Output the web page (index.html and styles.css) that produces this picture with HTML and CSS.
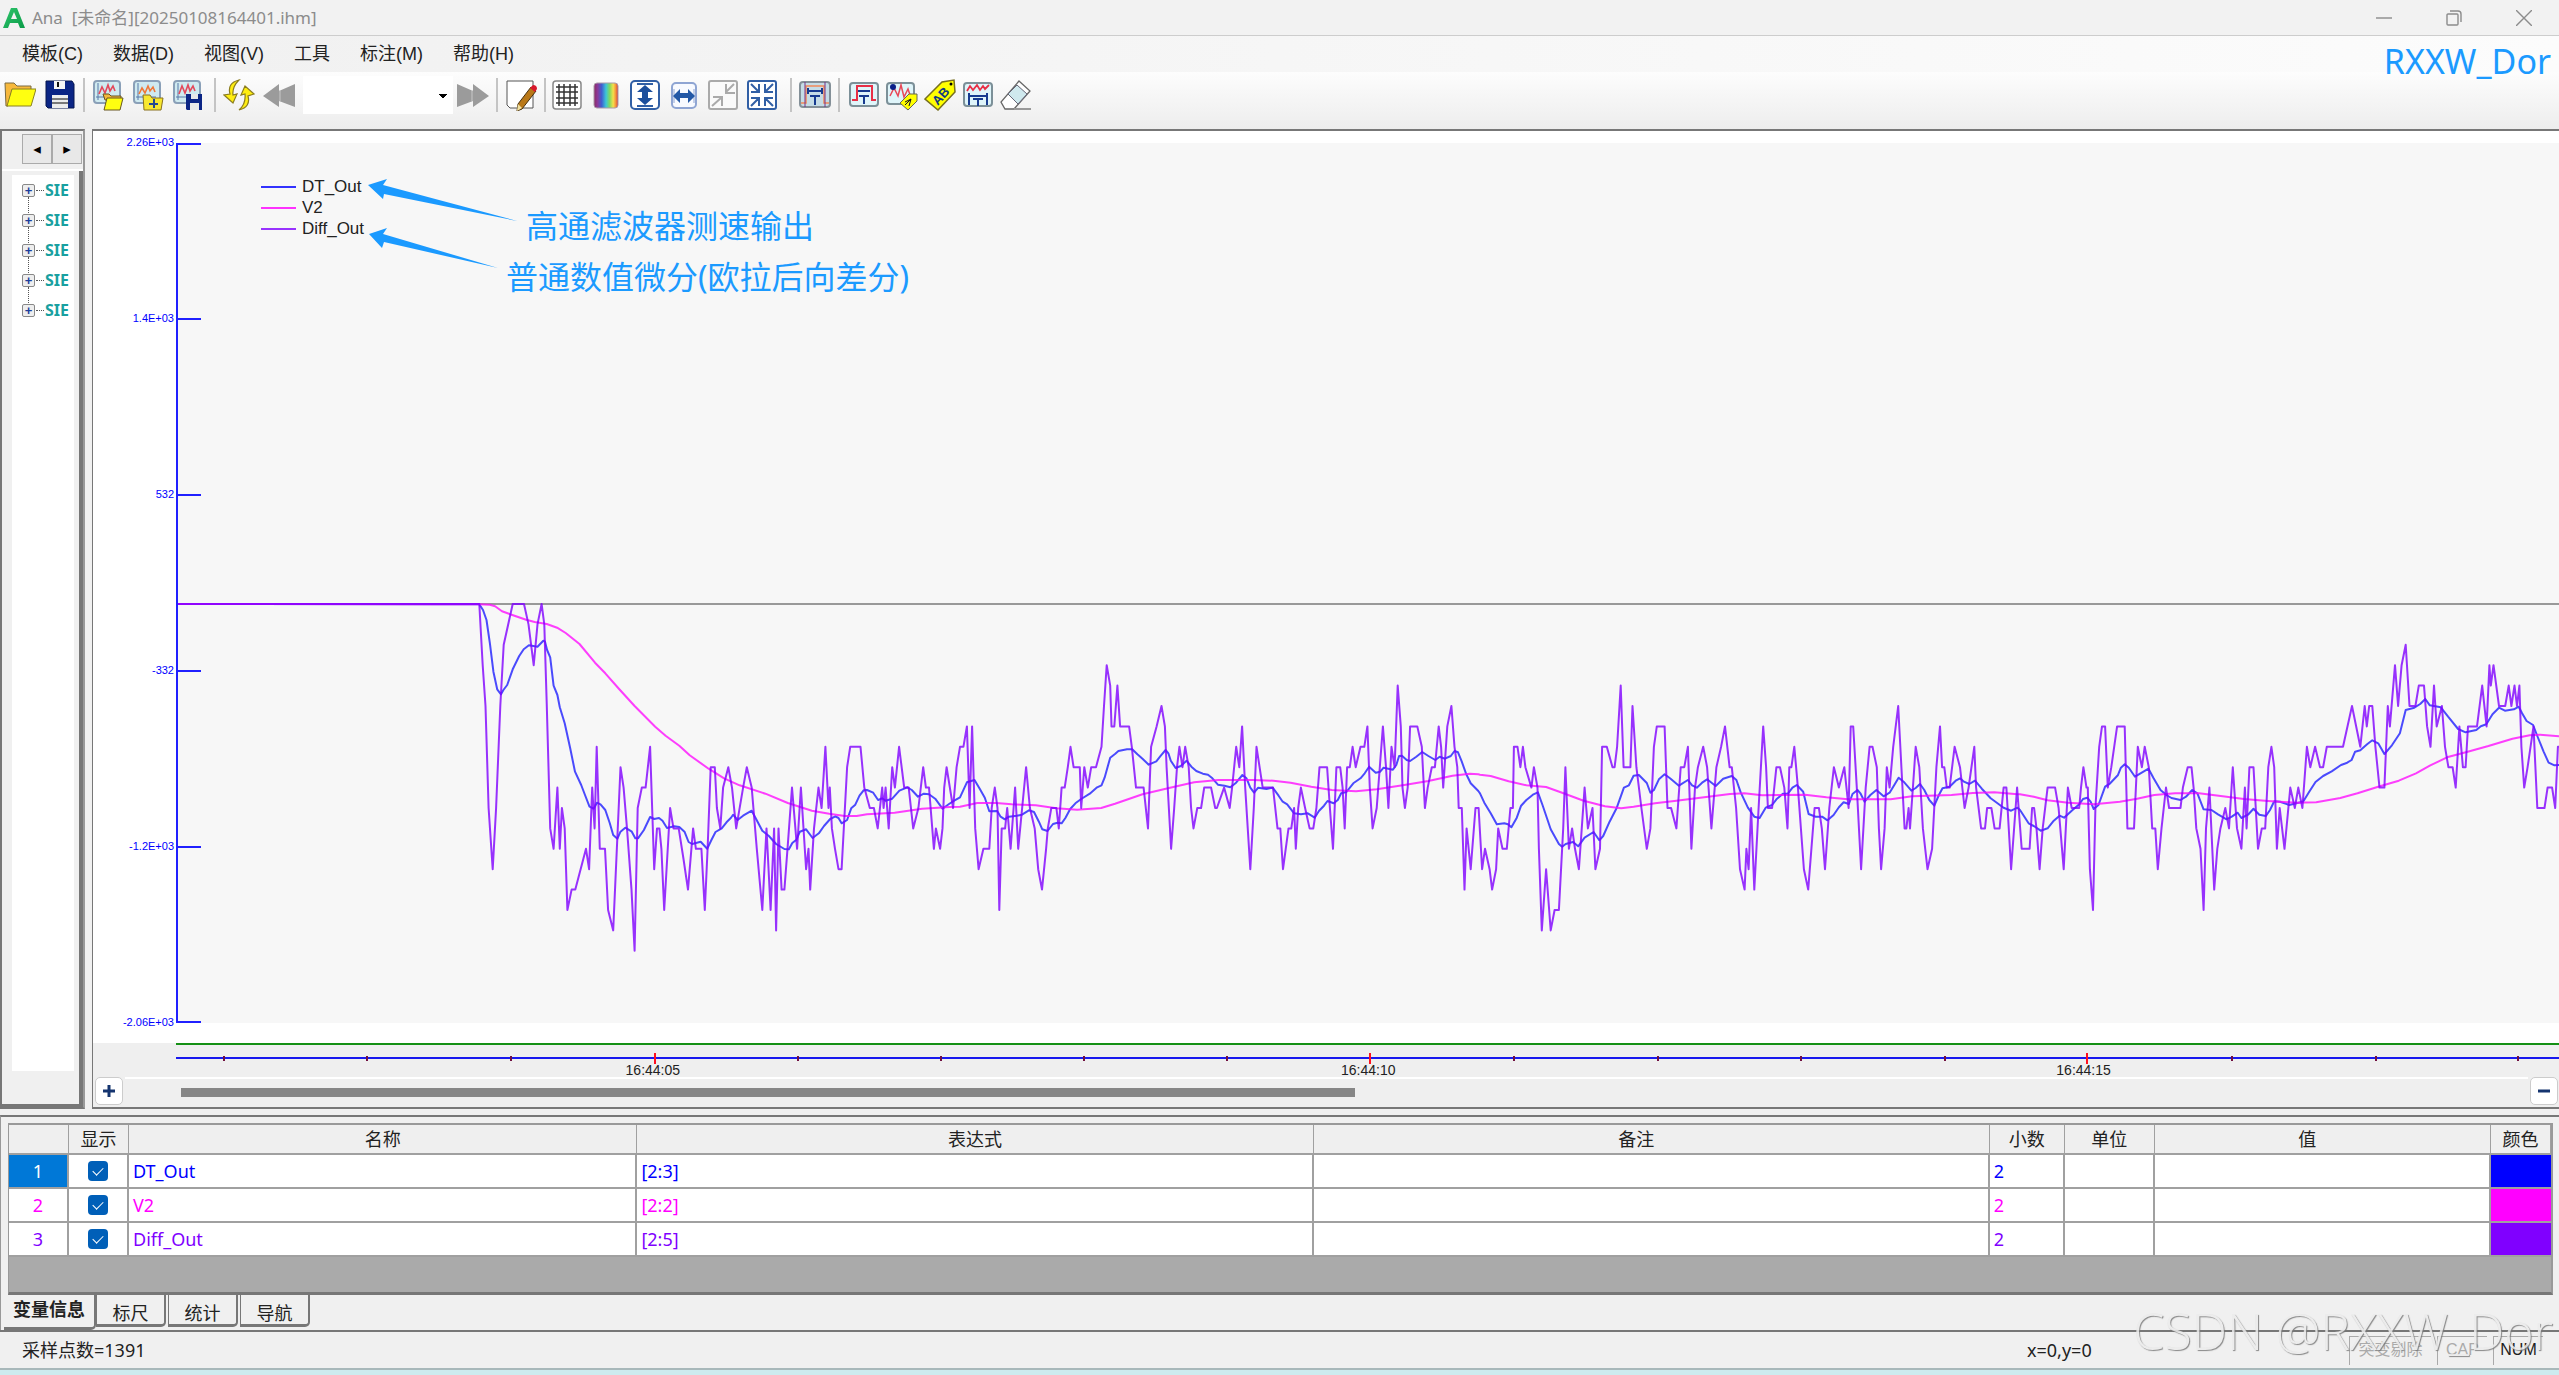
FILE: index.html
```html
<!DOCTYPE html>
<html lang="zh-CN">
<head>
<meta charset="utf-8">
<title>Ana [未命名][20250108164401.ihm]</title>
<link rel="stylesheet" href="styles.css">
</head>
<body>
<svg class="defs" aria-hidden="true">
  <defs>
    <linearGradient id="spectrum"><stop offset="0" stop-color="#8b2a63"/><stop offset=".15" stop-color="#8a3a9a"/><stop offset=".32" stop-color="#3f5fd0"/><stop offset=".5" stop-color="#3cc6d8"/><stop offset=".65" stop-color="#7fd860"/><stop offset=".8" stop-color="#f5e04a"/><stop offset=".92" stop-color="#f58a3a"/><stop offset="1" stop-color="#c33"/></linearGradient>
    <linearGradient id="logo" x2="1" y2="1"><stop offset="0" stop-color="#2fc46b"/><stop offset="1" stop-color="#0a9c48"/></linearGradient>
    <g id="screen"><rect x="2" y="2" width="26" height="22" rx="3" fill="#cfeaf0" stroke="#8aa0b8" stroke-width="2"/><path d="M6 4v17M4 18h20" stroke="#5878a8" fill="none"/></g>
    <g id="frame"><rect x="2" y="4" width="28" height="23" rx="3" fill="#dff5fa" stroke="#7c9098" stroke-width="2"/></g>
  </defs>
</svg>

<header class="titlebar">
  <svg class="logo" viewBox="0 0 22 20"><path fill="url(#logo)" fill-rule="evenodd" d="M0 20 8 0h6l8 20h-5l-2-5H7l-2 5zM8 11h6l-3-7z"/></svg>
  <h1 class="title">Ana&nbsp; [未命名][20250108164401.ihm]</h1>
  <div class="window-buttons">
    <button aria-label="最小化"><svg viewBox="0 0 16 16"><path d="M0 8h16"/></svg></button>
    <button aria-label="还原"><svg viewBox="0 0 16 16"><rect x="1" y="4" width="11" height="11" rx="1"/><path d="M4 1h8q3 0 3 3v8"/></svg></button>
    <button aria-label="关闭"><svg viewBox="0 0 16 16"><path d="m0 0 16 16M16 0 0 16"/></svg></button>
  </div>
</header>

<div class="command-area">
  <nav class="menubar">
    <button>模板(C)</button><button>数据(D)</button><button>视图(V)</button><button>工具</button><button>标注(M)</button><button>帮助(H)</button>
  </nav>
  <div class="toolbar">
    <button aria-label="打开"><svg viewBox="0 0 32 32"><path d="M1 4h9l3 3h14v7H7L4 27H2z" fill="#f7b83c" stroke="#7a6a40"/><path d="M8 10h24l-5 17H3z" fill="#ffff10" stroke="#8a8020"/></svg></button>
    <button aria-label="保存"><svg viewBox="0 0 32 32"><path d="M2 2h26l2 3v24H4l-2-2z" fill="#0b2585" stroke="#06164e"/><rect x="10" y="2" width="11" height="8" fill="#f6f6f6"/><path d="M14 3v5" stroke="#111" stroke-width="2"/><rect x="8" y="16" width="16" height="13" fill="#eee"/><path d="M8 20h16M8 24h16" stroke="#555" stroke-width="1.5"/></svg></button>
    <span class="sep"></span>
    <div class="data-tools">
    <button aria-label="打开数据"><svg viewBox="0 0 32 32"><use href="#screen"/><path d="m7 15 3-7 3 6 3-8 2 6 3-5 2 5" fill="none" stroke="#e3485a" stroke-width="1.6"/><path d="M11 15h6l2 2h10v4H13z" fill="#f5b83c" stroke="#665520"/><path d="M15 19h16l-3 12H12z" fill="#ffff10" stroke="#665520"/></svg></button>
    <button aria-label="追加数据"><svg viewBox="0 0 32 32"><use href="#screen"/><path d="m7 15 3-6 3 5 3-7 2 5 3-4 2 5" fill="none" stroke="#f07838" stroke-width="1.6"/><path d="M11 16h7l2 3h11l-2 12H12z" fill="#f8e830" stroke="#887020"/><path d="M22 20v9M17 25h9" stroke="#264a90" stroke-width="2"/></svg></button>
    <button aria-label="保存数据"><svg viewBox="0 0 32 32"><use href="#screen"/><path d="m7 15 3-8 3 7 3-8 2 6 3-5 2 5" fill="none" stroke="#e3485a" stroke-width="1.6"/><path d="M14 15h16v16H15l-1-1z" fill="#0b2585"/><path d="M19 15h7v5h-7zM18 24h9v7h-9z" fill="#e8e8e8"/></svg></button>
    </div>
    <span class="sep"></span>
    <button aria-label="刷新"><svg viewBox="0 0 32 32"><path d="M16 1Q4 4 7 15l-6 1 9 8 4-9-4 1Q9 8 16 1zM16 31q12-3 9-14l6-2-9-8-4 9 4-1q1 10-6 16z" fill="#ffee10" stroke="#8b7d20" stroke-width="1.2"/></svg></button>
    <button aria-label="后退"><svg viewBox="0 0 32 32"><path d="M0 17 16 5v7L32 5v23l-16-6v6z" fill="#9b9b9b"/><path d="M17 11v11" stroke="#c8c8c8"/></svg></button>
    <select class="combo" aria-label="位置"><option></option></select>
    <button aria-label="前进"><svg viewBox="0 0 32 32"><path d="M32 17 16 5v7L0 5v23l16-6v6z" fill="#9b9b9b"/><path d="M15 11v11" stroke="#c8c8c8"/></svg></button>
    <span class="sep"></span>
    <button aria-label="编辑"><svg viewBox="0 0 32 32"><path d="M2 2h26v27H5l-3-3z" fill="#fff" stroke="#555"/><path d="m26 8 5 4-14 18-5 2 1-7z" fill="#b97817" stroke="#463010"/><path d="m25 9 3-3q4 0 4 4l-2 3z" fill="#d8182c"/><path d="m13 25 4 4-5 3z" fill="#f0e0a0"/></svg></button>
    <span class="sep"></span>
    <div class="view-tools">
    <button aria-label="网格"><svg viewBox="0 0 32 32"><rect x="2" y="2" width="28" height="28" rx="3" fill="#fff" stroke="#888" stroke-width="1.5"/><path d="M8 5v22M13 5v22M19 5v22M24 5v22M5 8h22M5 13h22M5 19h22M5 24h22" stroke="#333" stroke-width="1.5"/></svg></button>
    <button aria-label="颜色"><svg viewBox="0 0 32 32"><rect x="4" y="4" width="24" height="25" rx="3" fill="url(#spectrum)" stroke="#a99aa8"/></svg></button>
    <button aria-label="纵向缩放"><svg viewBox="0 0 32 32" class="blue"><rect x="2" y="2" width="28" height="28" rx="4" fill="#fff"/><path d="M8 5h16M8 27h16"/><path d="m16 6 8 7h-5v6h5l-8 7-8-7h5v-6H8z" fill="#1d4f9c" stroke="none"/></svg></button>
    <button aria-label="横向缩放"><svg viewBox="0 0 32 32"><rect x="4" y="4" width="24" height="25" rx="4" fill="#f8faff" stroke="#8fa5d3" stroke-width="2"/><path d="M6 10v14M26 10v14" stroke="#8fa5d3"/><path d="m5 17 7-7v4h8v-4l7 7-7 7v-5h-8v5z" fill="#2358a6"/></svg></button>
    <button aria-label="缩小"><svg viewBox="0 0 32 32" class="grey"><rect x="2" y="2" width="28" height="28" rx="2" fill="#fafafa"/><path d="m27 5-8 8M19 5v9h9M5 27l9-8M6 18h9v9"/></svg></button>
    <button aria-label="适应窗口"><svg viewBox="0 0 32 32" class="blue"><rect x="2" y="2" width="28" height="28" rx="2" fill="#fff"/><path d="m5 5 8 8M27 5l-8 8M5 27l8-8M27 27l-8-8M5 13h8V5M19 5v8h8M5 19h8v8M27 19h-8v8"/></svg></button>
    </div>
    <span class="sep"></span>
    <button aria-label="时间标尺"><svg viewBox="0 0 32 32"><rect x="1" y="3" width="30" height="25" rx="3" fill="#c5dce6" stroke="#849098" stroke-width="2"/><path d="M2 24h5V7h18v17h5" fill="none" stroke="#f28858" stroke-width="1.5"/><path d="M6 3v25M26 3v25" stroke="#738"/><path d="M9 12h14M11 17h10M16 17v9M9 9v6M23 9v6" stroke="#173b90" stroke-width="2"/></svg></button>
    <span class="sep"></span>
    <div class="tag-tools">
    <button aria-label="周期标注"><svg viewBox="0 0 32 32"><use href="#frame"/><path d="M4 21h5V7h15v14h4" fill="none" stroke="#e82f46" stroke-width="2"/><path d="M10 12h12M11 17h10M16 17v8" stroke="#173b90" stroke-width="2"/></svg></button>
    <button aria-label="波形标注"><svg viewBox="0 0 32 32"><rect x="1" y="4" width="27" height="21" rx="3" fill="#dff5fa" stroke="#7c9098" stroke-width="2"/><path d="m4 17 4-8 4 8 3-11 3 12 4-8 2 6" fill="none" stroke="#e84858" stroke-width="1.5"/><circle cx="7" cy="8" r="3" fill="#0b1f88"/><path d="m14 24 9-9h8v7l-9 9z" fill="#ff0" stroke="#665"/><path d="m19 26 6-6m-2 7 2-7-6 3" stroke="#112" fill="none"/></svg></button>
    <button aria-label="文字标注"><svg viewBox="0 0 32 32"><path d="M1 20 18 3l12-2 1 12-17 18z" fill="#ff0" stroke="#776f20" stroke-width="1.5"/><circle cx="27" cy="5" r="1.5"/><text x="-9" y="5" transform="translate(16 17) rotate(-48)" class="tag-text">AB</text></svg></button>
    <button aria-label="区间标注"><svg viewBox="0 0 32 32"><use href="#frame"/><path d="m5 12 3-5 3 4 4-5 3 5 3-4 2 3 4-4" fill="none" stroke="#e82f46" stroke-width="1.8"/><path d="M7 14v12M25 14v12M8 17h16M11 20h10M16 20v7" stroke="#173b90" stroke-width="2"/></svg></button>
    <button aria-label="擦除"><svg viewBox="0 0 32 32"><path d="m19 2 11 10-16 18H5l-4-7z" fill="#fff" stroke="#666" stroke-width="1.3"/><path d="m17 6 10 9-9 10L8 15z" fill="#cfe9ee" stroke="#667"/><path d="M14 30h17" stroke="#999" stroke-width="2"/></svg></button>
    </div>
  </div>
  <span class="author">RXXW_Dor</span>
</div>

<main class="workspace">
  <aside class="side">
    <div class="side-nav"><button aria-label="左">◂</button><button aria-label="右">▸</button></div>
    <div class="side-body">
      <ul class="tree">
        <li><button aria-label="展开">+</button><span>SIE</span></li>
        <li><button aria-label="展开">+</button><span>SIE</span></li>
        <li><button aria-label="展开">+</button><span>SIE</span></li>
        <li><button aria-label="展开">+</button><span>SIE</span></li>
        <li><button aria-label="展开">+</button><span>SIE</span></li>
      </ul>
    </div>
  </aside>

  <section class="chart">
    <div class="plot-row">
      <div class="y-labels"><span>2.26E+03</span><span>1.4E+03</span><span>532</span><span>-332</span><span>-1.2E+03</span><span>-2.06E+03</span></div>
      <div class="plot">
        <svg class="plot-svg" viewBox="176 143 2383 880" preserveAspectRatio="none">
          <path class="zero" d="M176 604H2559"/>
          <path id="line-dt" class="line dt"/>
          <path id="line-v2" class="line v2"/>
          <path id="line-diff" class="line diff"/>
          <path class="axis" d="M201 144H177V1022H201M177 319H201M177 495H201M177 671H201M177 847H201"/>
        </svg>
        <ul class="legend">
          <li class="c-dt"><span>DT_Out</span></li><li class="c-v2"><span>V2</span></li><li class="c-diff"><span>Diff_Out</span></li>
        </ul>
        <svg class="arrows" viewBox="0 0 160 100"><path d="m1 14 19-6-4 6 134 36L17 23l-1 5zM2 63l18-6-4 6 115 34L17 71l-2 6z"/></svg>
        <p class="note note-high">高通滤波器测速输出</p>
        <p class="note note-diff">普通数值微分(欧拉后向差分)</p>
      </div>
    </div>
    <div class="time-row">
      <div class="time-axis">
        <svg class="time-svg" viewBox="176 1044 2383 22" preserveAspectRatio="none">
          <path class="time-line" d="M176 1057H2559"/>
          <path class="minor" d="M224 1055v5M367 1055v5M511 1055v5M798 1055v5M941 1055v5M1084 1055v5M1227 1055v5M1514 1055v5M1658 1055v5M1801 1055v5M1945 1055v5M2232 1055v5M2376 1055v5M2518 1055v5"/>
          <path class="major" d="M655 1052v11M1370 1052v11M2087 1052v11"/>
        </svg>
        <div class="time-labels"><span>16:44:05</span><span>16:44:10</span><span>16:44:15</span></div>
      </div>
    </div>
    <div class="scroll-row">
      <button class="zoom" aria-label="放大"><svg viewBox="0 0 14 14"><path d="M7 1v12M1 7h12"/></svg></button>
      <div class="track"><div class="thumb"></div></div>
      <button class="zoom" aria-label="缩小"><svg viewBox="0 0 14 14"><path d="M1 7h12"/></svg></button>
    </div>
  </section>
</main>

<section class="bottom">
  <div class="grid-box">
    <table class="vars">
      <colgroup><col class="w-s"><col class="w-s"><col class="w-name"><col class="w-wide"><col class="w-wide"><col class="w-dec"><col class="w-unit"><col><col class="w-s"></colgroup>
      <thead><tr><th></th><th>显示</th><th>名称</th><th>表达式</th><th class="has-sort">备注</th><th>小数</th><th>单位</th><th class="has-sort">值</th><th>颜色</th></tr></thead>
      <tbody>
        <tr class="c-dt"><td class="num selected">1</td><td class="tick"><input type="checkbox" checked aria-label="显示 DT_Out"></td><td>DT_Out</td><td>[2:3]</td><td></td><td>2</td><td></td><td></td><td class="swatch"></td></tr>
        <tr class="c-v2"><td class="num">2</td><td class="tick"><input type="checkbox" checked aria-label="显示 V2"></td><td>V2</td><td>[2:2]</td><td></td><td>2</td><td></td><td></td><td class="swatch"></td></tr>
        <tr class="c-diff"><td class="num">3</td><td class="tick"><input type="checkbox" checked aria-label="显示 Diff_Out"></td><td>Diff_Out</td><td>[2:5]</td><td></td><td>2</td><td></td><td></td><td class="swatch"></td></tr>
      </tbody>
    </table>
  </div>
  <div class="tabs"><button class="active">变量信息</button><button>标尺</button><button>统计</button><button>导航</button></div>
</section>

<footer class="status">
  <span class="samples">采样点数=1391</span>
  <span class="coords">x=0,y=0</span>
  <span class="cell dim w-cut">突变剔除</span>
  <span class="cell dim">CAP</span>
  <span class="cell">NUM</span>
  <span class="watermark">CSDN @RXXW_Dor</span>
</footer>
<div class="desktop-edge"></div>
<script src="chart.js"></script>
</body>
</html>
```

FILE: styles.css
```css
* { box-sizing: border-box; }
body {
  margin: 0;
  height: 100vh;
  display: flex;
  flex-direction: column;
  background: #f0f0f0;
  color: #222;
  font: 18px/24px "Noto Sans", "Noto Sans CJK SC", sans-serif;
  overflow: hidden;
}
button { border: 0; padding: 0; background: none; font: inherit; color: inherit; }
ul, p, h1 { margin: 0; padding: 0; list-style: none; }
.defs { position: absolute; width: 0; height: 0; }

.titlebar { display: flex; align-items: center; height: 36px; padding-left: 3px; background: #f2f2f2; border-bottom: 1px solid #cdcdcd; }
.logo { width: 22px; height: 20px; }
.title { flex: 1; margin-left: 7px; font-size: 17px; font-weight: 400; color: #8c8c8c; }
.window-buttons { display: flex; }
.window-buttons button { display: flex; justify-content: center; width: 70px; }
.window-buttons svg { width: 16px; height: 16px; fill: none; stroke: #8c8c8c; stroke-width: 1.4; }

.command-area { position: relative; }
.menubar { display: flex; gap: 30px; height: 36px; padding-left: 22px; background: linear-gradient(to right, #f0f0f0, #f3f3f3 25%, #fcfcfc); font: 18px/36px "Liberation Sans", "Noto Sans CJK SC", sans-serif; }
.toolbar { display: flex; align-items: center; height: 57px; padding: 0 0 12px; background: linear-gradient(#fdfdfd, #ededed); }
.toolbar button { display: flex; justify-content: center; width: 40px; }
.toolbar svg { width: 32px; height: 32px; }
.data-tools, .view-tools, .tag-tools { display: flex; }
.data-tools { padding-right: 3px; }
.view-tools { margin-left: -2px; padding-right: 6px; }
.toolbar .view-tools button { width: 39px; }
.tag-tools { padding-left: 2px; }
.toolbar .tag-tools button { width: 38px; }
.sep { width: 2px; height: 34px; margin: 0 3px; background: #c4c4c4; }
.combo { appearance: none; width: 150px; height: 38px; margin: 0 0 0 4px; border: 0; border-radius: 0; background: linear-gradient(45deg, transparent 50%, #000 50%) no-repeat 136px 18px / 4px 4px, linear-gradient(-45deg, transparent 50%, #000 50%) no-repeat 140px 18px / 4px 4px, #fff; }
.blue { fill: none; stroke: #315fa5; stroke-width: 2; }
.grey { fill: none; stroke: #aaa; stroke-width: 2; }
.tag-text { font: bold 13px "Liberation Sans", sans-serif; fill: #123a80; }
.author { position: absolute; right: 8px; top: 3px; font-size: 34px; line-height: 44px; color: #1b9aff; }

.workspace { flex: 1; display: flex; gap: 7px; min-height: 0; }
.side { display: flex; flex-direction: column; width: 85px; border: 2px solid #777; border-right-color: #999; }
.side-nav { display: flex; padding: 3px 0 5px 20px; border-bottom: 2px solid #fff; }
.side-nav button { width: 30px; height: 30px; border: 1px solid #aaa; background: #e8e8e8; font: 15px/28px "DejaVu Sans", sans-serif; color: #000; }
.side-body { flex: 1; display: flex; padding: 4px 5px 33px 10px; border-right: 4px solid #777; border-bottom: 3px solid #777; }
.tree { flex: 1; background: #fff; padding-left: 10px; }
.tree li { position: relative; display: flex; align-items: center; height: 30px; font: bold 16px/30px "Noto Sans", sans-serif; color: #18a0a0; }
.tree button { width: 13px; height: 13px; border: 1px solid #888; border-radius: 2px; background: #eee; color: #1c3f9c; font: bold 13px/11px "Liberation Sans", sans-serif; }
.tree li::before { content: ""; order: 1; width: 8px; margin: 0 1px; border-top: 1px dotted #555; }
.tree span { order: 2; }
.tree li + li::after { content: ""; position: absolute; left: 6px; top: -8px; height: 16px; border-left: 1px dotted #555; }

.chart { flex: 1; min-width: 0; display: flex; flex-direction: column; border: solid #777; border-width: 2px 0 2px 1px; background: #fff; }
.plot-row { flex: 1; display: grid; grid-template: minmax(0, 1fr) / 83px 1fr; min-height: 0; padding: 12px 0 20px; }
.y-labels { display: flex; flex-direction: column; justify-content: space-between; align-items: flex-end; margin: -9px 2px -7px 0; font: 11px/16px "Liberation Sans", sans-serif; color: #0000ff; }
.plot { position: relative; background: #f7f7f7; min-height: 0; }
.plot-svg { display: block; width: 100%; height: 100%; }
.plot-svg path { fill: none; vector-effect: non-scaling-stroke; }
.zero { stroke: #999; stroke-width: 2; }
.plot-svg .line { stroke-width: 2; stroke-linejoin: round; opacity: .8; }
.dt { stroke: #2020ff; }
.v2 { stroke: #ff10ff; }
.diff { stroke: #8000ff; }
.axis { stroke: #2020ff; stroke-width: 2; }
.c-dt { color: #0000ff; }
.c-v2 { color: #ff00ff; }
.c-diff { color: #8000ff; }
.legend { position: absolute; left: 85px; top: 33px; font: 17px/21px "Liberation Sans", sans-serif; }
.legend li { display: flex; align-items: center; gap: 6px; }
.legend li::before { content: ""; width: 35px; height: 2px; background: currentColor; opacity: .8; }
.legend span { color: #222; }
.arrows { position: absolute; left: 191px; top: 28px; width: 160px; height: 100px; fill: #1b9aff; }
.note { position: absolute; font-size: 32px; line-height: 40px; color: #1b9aff; white-space: nowrap; }
.note-high { left: 350px; top: 63px; }
.note-diff { left: 330px; top: 114px; }

.time-row { padding-left: 83px; background: #efefef; }
.time-axis { position: relative; border-top: 2px solid #159015; }
.time-svg { display: block; width: 100%; height: 22px; }
.time-svg path { fill: none; stroke-width: 2; }
.time-line { stroke: #1818ee; }
.time-svg .minor { stroke: #701040; }
.time-svg .major { stroke: #ff1020; }
.time-labels { display: flex; height: 9px; padding-left: 5%; font: 14px/6px "Liberation Sans", sans-serif; }
.time-labels span { flex: 0 0 31.6%; text-align: center; }
.scroll-row { display: flex; gap: 2px; height: 31px; padding: 1px 1px 1px 2px; background: #efefef; }
.zoom { display: flex; align-items: center; justify-content: center; width: 28px; height: 28px; border: 1px solid #ccc; border-radius: 5px; background: #fff; }
.zoom svg { width: 14px; height: 14px; stroke: #15346f; stroke-width: 3; }
.track { flex: 1; padding: 9px 0 0 56px; border-top: 2px solid #fff; }
.thumb { width: 50%; height: 9px; background: #868686; }

.bottom { margin-top: 6px; padding: 6px 6px 0 7px; border-top: 2px solid #777; border-left: 1px solid #999; }
.grid-box { height: 172px; background: #aaa; border: solid #999; border-width: 2px 2px 3px 1px; border-bottom-color: #777; }
.vars { width: 100%; table-layout: fixed; border-collapse: separate; border-spacing: 0; line-height: 30px; }
.vars th { height: 30px; padding: 0; font-weight: 400; line-height: 28px; background: #efefef; border: solid #a0a0a0; border-width: 0 1px 2px 0; }
.vars .has-sort { padding-right: 30px; }
.vars td { height: 34px; padding: 0 4px; background: #fff; border: solid #a0a0a0; border-width: 0 2px 2px 0; }
.w-s { width: 60px; }
.w-name { width: 20%; }
.w-wide { width: 26.6%; }
.w-dec { width: 75px; }
.w-unit { width: 90px; }
.vars .num, .vars .tick { padding: 0; text-align: center; }
.vars .selected { background: #0078d7; color: #fff; }
.vars .swatch { background: currentColor; border-right: 0; }
.tick input { appearance: none; display: block; width: 20px; height: 20px; margin: 0 auto; border-radius: 4px; background: #005fb8; }
.tick input::after { content: ""; display: block; width: 9px; height: 5px; margin: 0 auto; border: solid #fff; border-width: 0 0 1px 1px; transform: translateY(6px) rotate(-45deg); }
.tabs { display: flex; align-items: flex-start; gap: 2px; height: 35px; margin-left: -4px; }
.tabs button { width: 70px; height: 32px; padding-top: 6px; border: solid #777; border-width: 0 2px 3px 1px; border-radius: 0 0 5px 0; line-height: 22px; }
.tabs .active { width: 92px; height: 35px; margin-right: -2px; padding: 0 0 4px; border-left: 0; font-weight: 600; }

.status { position: relative; display: flex; align-items: center; height: 40px; padding: 0 16px 0 22px; border: solid #777; border-width: 2px 0; border-bottom-color: #a8b8ba; }
.samples { flex: 1; }
.coords { width: 316px; }
.cell { width: 50px; height: 29px; margin-left: 6px; border: solid #aaa; border-width: 1px 0 0 1px; font: 16px/26px "Liberation Sans", "Noto Sans CJK SC", sans-serif; text-align: center; }
.dim { color: #aaa; }
.w-cut { width: 82px; }
.watermark { position: absolute; right: 6px; bottom: 3px; font: 300 50px/68px "Open Sans", sans-serif; color: #ececec; text-shadow: 1px 1px 1px #777; opacity: .85; white-space: nowrap; }
.desktop-edge { height: 5px; background: #cdebef; }
```

FILE: chart.js
```js
const blocks = [
  { x0: 440, sx: 2.9037, y0: 580,
    diff: "0,0 114,0 124,3 132,5 141,10 153,13 163,10 175,5 185,2 211,0 244,0 257,1 272,3 283,1 295,0 303,1 310,5 320,11 330,12 341,9 348,12 354,10 362,11 370,15 382,14 393,14 424,12 433,13 442,9 449,11 455,7 464,12 479,12 488,15 503,16 524,8 533,9 543,11 556,14 565,17 574,10 586,9 597,9 610,7 622,13 630,11 637,11 643,12 651,15 668,10 678,11 693,11 707,12.5 720,14 735,11 743,12 759,12 769,15 777,12 786,8 798,8 804,10 814,11 822,9 837,8 848,9 860,11 880,9 891,8 905,9 920,12 936,15 948,11 960,15 970,11 976,16 983,11 992,14 1000,14 1009,12 1022,9 1037,12 1048,9 1063,13 1070,12 1075,14 1086,11 1099,9 1108,10 1119,7 1128,10 1132,9 1138,11 1147,12 1157,13 1166,13 1182,8 1191,7 1221,7 1232,9 1248,10 1260,10 1271,11 1284,9 1288,10 1294,9 1303,11 1313,8 1321,9 1333,7 1348,9 1361,9 1374,11 1389,10 1403,8 1411,9 1420,9 1434,12 1440,11 1452,12 1459,11 1464,9 1471,8 1490,10 1500,8",
    dt: "0,73 114,73 125,90 135,120 145,190 155,275 166,328 177,343 184,330 195,315 211,268 230,228 243,208 258,196 283,200 300,182 305,185 311,210 320,232 330,317 341,345 348,382 362,430 378,505 392,575 410,615 421,645 434,680 446,686 456,668 466,673 480,690 493,730 503,765 515,776 524,755 538,743 557,755 567,775 575,775 592,750 610,711 622,717 636,714 646,722 659,744 680,739 695,741 710,755 722,786 732,792 757,785 776,806 788,780 800,756 818,745 832,727 845,713 851,704 864,720 880,707 905,692 918,717 936,752 955,768 976,792 1000,807 1013,808 1023,789 1035,779 1045,755 1063,748 1082,774 1100,760 1115,738 1133,717 1148,709 1157,714 1166,730 1182,720 1194,685 1206,674 1218,647 1230,631 1240,630 1258,638 1272,660 1284,655 1294,662 1313,656 1334,632 1357,622 1370,630 1388,650 1405,641 1420,643 1438,656 1459,686 1478,672 1493,662",
    v2: "0,73 114,73 145,74 160,79 180,94 210,105 250,119 275,126 310,132 340,143 365,159 405,192 450,248 480,280 520,327 565,378 625,440 655,467 695,497 725,526 780,566 825,595 870,616 945,641 1010,669 1080,692 1130,701 1175,708 1210,708 1240,703 1320,698 1400,686 1480,681" },
  { x0: 960, sx: 2.9037, y0: 620,
    diff: "0,7 10,7 20,6 28,10 35,6 44,11 54,13 68,12 85,12 92,10 101,9 109,10 114,15 121,11 131,11 137,10 147,12 160,9 169,12 192,8 203,10 217,11 227,13 238,14 250,12 255,11 265,10 280,10 287,11 295,9 304,9 313,8 321,7 330,8 348,8 352,10 361,8 371,9 381,8 395,8 411,7 418,5 426,3 436,4 440,6 448,6 457,4 465,6 491,6 499,7 511,9 533,9 546,11 555,7 571,6 585,5 595,6 600,8 613,12 622,10 630,8 637,7 646,8 654,7 664,8 671,10 678,11 689,10 700,10 709,9 729,9 741,10 746,10 767,9 783,10 790,9 802,7 811,8 819,6 828,9 843,13 853,10 861,7 879,9 909,9 922,11 930,11 938,13 954,11 962,11 970,10 975,12 982,10 990,9 1002,10 1015,11 1026,11 1035,10 1044,8 1066,8 1074,10 1083,12 1093,8 1104,8 1111,9 1117,11 1124,8 1132,8 1140,7 1149,8 1163,7 1174,7 1183,6 1190,9 1198,11 1210,10 1228,6 1237,8 1244,10 1253,7 1262,8 1271,4 1280,6 1285,9 1292,10 1300,9 1307,6 1328,6 1341,7 1350,10 1358,9 1370,8 1379,8 1390,6 1397,7 1403,9 1415,6 1427,5 1436,7 1444,8 1448,10 1457,10 1465,14 1471,11 1483,13 1497,10 1506,10",
    dt: "0,532 20,487 42,480 58,508 72,533 85,574 108,573 118,590 130,598 142,590 165,587 180,584 200,571 215,576 229,605 239,628 254,633 270,612 283,608 295,610 306,594 320,567 335,550 352,537 377,521 398,502 411,496 420,473 436,413 450,402 460,393 485,388 500,388 515,403 530,416 548,434 570,424 583,407 597,390 605,400 612,422 626,444 641,438 658,422 672,440 686,453 705,461 720,464 733,475 749,494 768,497 785,502 800,490 820,465 832,475 843,503 854,518 866,503 890,507 908,503 925,527 937,545 950,553 970,580 990,583 1010,580 1030,593 1042,573 1057,557 1067,543 1085,550 1097,540 1107,520 1122,516 1142,490 1163,475 1175,460 1188,440 1207,458 1220,455 1230,443 1257,449 1267,435 1275,408 1283,407 1297,420 1307,423 1325,410 1342,396 1360,408 1380,420 1393,410 1408,416 1425,408 1436,393 1446,397 1457,425 1470,463 1483,490 1505,513",
    v2: "0,560 50,549 105,549 150,553 220,556 280,565 340,569 410,564 450,551 530,523 610,503 680,487 750,480 850,480 910,482 960,488 1020,500 1080,510 1150,514 1210,508 1290,495 1360,483 1430,467 1480,461 1505,463" },
  { x0: 1480, sx: 2.8, y0: 640,
    diff: "6,13 14,12 27,13 34,14 45,13 51,11 63,12 75,12 85,10 92,10 95,7 105,7 113,8 120,7 127,8 144,9 151,8 161,9 165,12 173,16 185,13 198,16 209,15 221,15 233,11 239,8 249,12 258,11 266,12 277,13 293,9 302,11 315,10 323,13 336,12 342,7 355,7 371,8 377,8 384,7 394,4 402,8 421,8 427,5 438,8 452,10 467,12 477,11 487,7 495,6 517,6 525,10 535,10 550,11 562,8 572,8 582,7 592,12 602,9 610,8 625,7 636,8 648,11 662,8 675,7 686,6 699,8 705,8 717,10 728,13 741,14 746,12 752,13 759,10 768,14 780,10 793,6 801,8 806,10 818,10 830,8 840,8 852,9 861,11 866,8 872,8 880,7 890,9 907,13 919,14 937,10 949,10 957,11 966,13 978,10 991,8 1005,9 1020,8 1032,10 1038,6 1045,6 1055,9 1067,13 1080,9 1091,7 1099,7 1111,8 1117,11 1123,13 1133,11 1139,8 1147,9 1157,7 1171,5 1180,8 1189,11 1194,11 1200,10 1204,11 1212,9 1220,7 1230,8 1240,11 1253,13 1266,12 1278,8 1288,6 1294,8 1300,8 1307,9 1315,9 1329,7 1344,8 1357,10 1368,9 1384,7 1389,9 1403,11 1414,11 1420,10 1432,10 1441,11 1455,11 1466,9 1474,9 1487,13 1504,9",
    dt: "0,460 12,488 30,520 47,553 68,550 78,553 88,562 103,533 115,497 130,480 148,464 162,457 175,495 198,568 221,612 230,620 240,612 260,606 275,619 293,593 318,576 334,601 345,588 363,545 383,503 403,443 417,436 430,407 445,405 467,429 477,458 487,450 501,418 517,403 532,415 557,437 582,420 594,436 607,443 622,428 636,418 660,438 681,416 705,408 718,420 730,457 750,503 768,530 783,534 800,503 818,495 830,478 848,461 862,461 875,443 887,435 905,455 920,522 940,530 958,530 973,541 990,525 1005,502 1018,487 1033,492 1043,462 1057,450 1065,460 1077,485 1093,465 1110,450 1130,469 1147,458 1160,435 1172,413 1186,425 1208,452 1220,444 1232,432 1244,450 1258,480 1272,497 1285,465 1295,445 1315,440 1332,422 1344,415 1355,425 1370,432 1386,422 1405,446 1430,475 1466,503 1487,512 1505,503",
    v2: "0,404 30,408 80,424 130,436 185,441 230,458 290,482 350,499 395,505 430,500 490,490 550,482 650,469 700,462 740,460 790,466 910,464 970,472 1030,478 1150,478 1210,469 1320,465 1380,459 1440,457 1505,463" },
  { x0: 2020, sx: 2.9037, y0: 620,
    diff: "5,12 28,12 35,10 41,10 48,11 57,13 66,11 80,9 102,9 112,10 127,13 133,11 139,9 150,10 172,10 177,9 184,8 193,9 197,9 203,13 212,15 219,10 230,7 238,6 247,6 255,9 265,8 282,6 304,6 312,11 331,11 342,7 354,8 362,7 374,8 384,11 393,11 400,13 411,11 424,9 433,10 466,10 473,9 487,8 498,8 504,9 512,11 524,12 533,15 540,11 550,9 564,14 573,12 582,11 596,10 607,11 618,8 630,11 643,12 653,9 658,11 666,8 678,8 691,12 702,11 712,11 721,8 730,7 738,8 746,12 754,10 768,12 785,9 798,10 808,9 820,10 833,7 843,8 857,7 871,8 880,8 891,7 938,7 964,5 988,7 1001,5 1007,6 1014,5 1023,5 1032,7 1044,9 1058,9 1068,5 1074,6 1089,3 1098,5 1108,3 1120,2 1131,5 1148,5 1158,4 1173,4 1182,6 1192,7 1202,4 1210,6 1225,5 1234,7 1244,8 1256,8 1265,9 1276,6 1286,8 1294,8 1301,6 1327,6 1342,4 1355,6 1363,3 1367,4 1375,3 1391,5 1409,5 1419,4 1427,5 1436,4 1443,5 1450,4 1456,7 1464,9 1474,8 1491,6 1502,10 1523,10 1532,9 1545,9 1554,10 1562,7 1568,7",
    dt: "0,570 25,610 40,618 60,632 80,625 98,602 115,587 128,593 150,572 172,553 183,537 195,533 205,545 214,567 228,555 247,500 262,490 284,466 293,443 304,433 316,443 334,470 350,460 373,446 388,475 408,510 425,525 440,534 466,540 482,530 500,510 515,520 533,568 556,570 575,583 600,598 615,590 632,578 643,594 662,584 678,566 695,584 714,588 726,570 738,544 755,545 782,555 805,549 822,545 838,518 858,486 880,468 905,454 932,435 950,428 963,420 973,395 988,391 1008,373 1023,361 1040,370 1058,402 1080,376 1103,340 1120,270 1145,263 1162,252 1177,237 1190,256 1222,262 1243,290 1272,327 1294,337 1325,330 1338,319 1354,313 1372,283 1391,263 1408,272 1434,268 1448,260 1458,280 1471,303 1490,315 1502,348 1520,394 1535,428 1552,436 1568,435",
    v2: "0,523 40,530 80,541 140,548 215,553 290,545 340,536 390,525 450,520 520,520 600,530 650,537 720,543 800,548 860,547 930,534 980,520 1040,500 1100,482 1150,460 1190,437 1240,412 1300,395 1360,378 1430,356 1480,346 1510,344 1568,349" }
];
const ZERO = 604, STEP = 20.4;

for (const name of ["dt", "v2", "diff"]) {
  const points = ["176," + ZERO];
  for (const block of blocks) {
    for (const pair of block[name].split(" ")) {
      const [a, b] = pair.split(",").map(Number);
      const y = name === "diff" ? ZERO + b * STEP : block.y0 + b / 3;
      points.push((block.x0 + a / block.sx).toFixed(1) + "," + y.toFixed(1));
    }
  }
  document.getElementById("line-" + name).setAttribute("d", "M" + points.join("L"));
}
```
